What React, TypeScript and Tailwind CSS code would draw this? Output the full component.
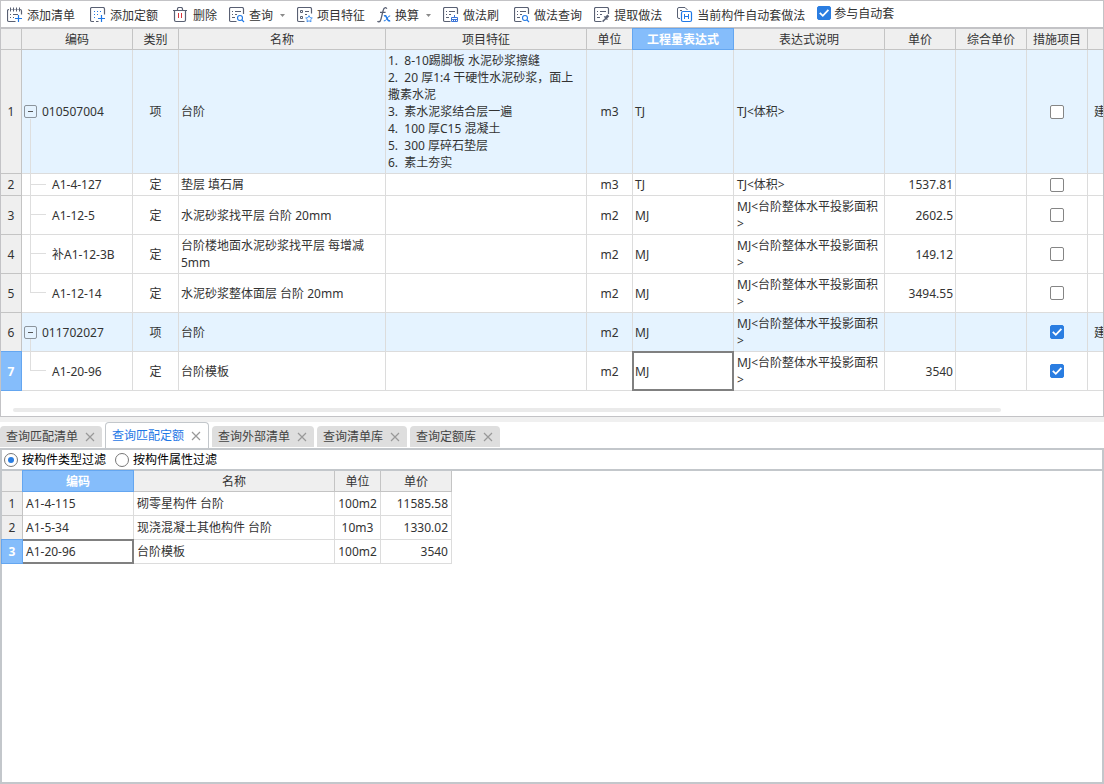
import type { ReactNode } from 'react';

const INK = '#596073';
const BLUE = '#1f78e6';

function Icon({ children }: { children: ReactNode }) {
  return (
    <svg width="16" height="16" viewBox="0 0 16 16" fill="none" stroke={INK} strokeWidth="1" className="shrink-0" aria-hidden="true">
      {children}
    </svg>
  );
}

const AddListIcon = () => (
  <Icon>
    <path strokeWidth="1.2" d="M8.5 14.5H2Q.5 14.5 .5 13V4Q.5 2.5 2 2.5M14.5 7.5V4Q14.5 2.5 13 2.5M4.5 2.5H5.5M7.5 2.5H8.5M10.5 2.5H11.5" />
    <path d="M3.5 .5V4.5M6.5 .5V4.5M9.5 .5V4.5M12.5 .5V4.5" />
    <path d="M3 7.5H4M6 7.5H11M3 10.5H4M6 10.5H7" />
    <path d="M11.5 8V15M8 11.5H15" stroke={BLUE} strokeWidth="1.2" />
  </Icon>
);

const AddQuotaIcon = () => (
  <Icon>
    <path strokeWidth="1.2" d="M8.5 14.5H6M4 14.5H2Q.5 14.5 .5 13V2Q.5 .5 2 .5H13Q14.5 .5 14.5 2V7.5" />
    <path d="M4 4.5H5M7 4.5H8M10 4.5H11M4 7.5H5M7 7.5H8M4 10.5H5" stroke={BLUE} />
    <path d="M11.5 8V15M8 11.5H15" stroke={BLUE} strokeWidth="1.2" />
  </Icon>
);

const TrashIcon = () => (
  <Icon>
    <path strokeWidth="1.2" d="M0 3.5H14M4.5 3.5V2Q4.5 .5 6 .5H8Q9.5 .5 9.5 2V3.5M1.5 3.5V13Q1.5 14.5 3 14.5H11Q12.5 14.5 12.5 13V3.5" />
    <path d="M5.5 6V11M8.5 6V11" stroke="#d8343c" />
  </Icon>
);

function Sheet() {
  return (
    <>
      <path strokeWidth="1.2" d="M7.5 14.5H2Q.5 14.5 .5 13V2Q.5 .5 2 .5H13Q14.5 .5 14.5 2V7" />
      <path d="M3 4.5H4M6 4.5H12M3 7.5H4M6 7.5H8M3 10.5H6" />
    </>
  );
}

const SearchIcon = () => (
  <Icon>
    <Sheet />
    <circle cx="11" cy="11" r="2.5" stroke={BLUE} strokeWidth="1.1" />
    <path d="M12.9 12.9L15 15" stroke={BLUE} strokeWidth="1.2" />
  </Icon>
);

const FeatureIcon = () => (
  <Icon>
    <path strokeWidth="1.2" d="M7.5 14.5H2Q.5 14.5 .5 13V2Q.5 .5 2 .5H13Q14.5 .5 14.5 2V6.5" />
    <path d="M3.5 3.5H5.5V5.5H3.5ZM3.5 9.5H5.5V11.5H3.5ZM8 4.5H12M8 7.5H10" />
    <path d="M12 8.6L13 10.6L15.3 11L13.7 12.6L14 14.8L12 13.8L10 14.8L10.3 12.6L8.7 11L11 10.6Z" stroke="#4a94ee" />
  </Icon>
);

const FormulaIcon = () => (
  <svg width="14" height="16" viewBox="0 0 14 16" fill="none" className="shrink-0" aria-hidden="true">
    <path d="M9.8 1.8Q9.4 .6 8.3 .7Q6.7 .9 6.1 3.6L4 12.2Q3.4 14.8 1.9 14.9Q.9 14.9 .6 14M3 5.3H8.6" stroke={INK} strokeWidth="1.3" />
    <path d="M7 9Q8.6 8.2 9.3 9.8L10.9 13Q11.5 14.4 13.2 13.6" stroke={BLUE} strokeWidth="1.6" />
    <path d="M13.2 8.9Q11.8 8.6 10.4 11L9.6 12.2Q8.2 14.4 6.8 13.8" stroke={BLUE} strokeWidth="1" />
  </svg>
);

const BrushIcon = () => (
  <Icon>
    <Sheet />
    <path d="M11.5 8V10.5M8.5 12.5V10.5H14.5V12.5M8 12.5H15M8.5 12.5V14.5H14.5V12.5M10.5 13V14.5M12.5 13V14.5" stroke="#3b74d8" />
  </Icon>
);

const PickIcon = () => (
  <Icon>
    <Sheet />
    <path d="M8.6 14.6L12 11.2" strokeWidth="1.5" />
    <path d="M10.2 9.4L13.4 12.6" strokeWidth="1.3" />
    <path d="M11.8 11L14.4 8.4" strokeWidth="2.6" />
  </Icon>
);

const AutoIcon = () => (
  <Icon>
    <path d="M3 11.5H2Q.5 11.5 .5 10V2Q.5 .5 2 .5H8L10.5 3M3 3.5H5" />
    <rect x="4.5" y="4.5" width="10" height="10" rx="1.5" stroke={BLUE} strokeWidth="1.2" />
    <path d="M7.5 7V12M11.5 7V12M7.5 9.5H11.5" stroke={BLUE} />
  </Icon>
);

type Tool = { label: string; icon: ReactNode; menu?: boolean; roomy?: boolean };

const tools: Tool[] = [
  { label: '添加清单', icon: <AddListIcon />, roomy: true },
  { label: '添加定额', icon: <AddQuotaIcon />, roomy: true },
  { label: '删除', icon: <TrashIcon /> },
  { label: '查询', icon: <SearchIcon />, menu: true },
  { label: '项目特征', icon: <FeatureIcon /> },
  { label: '换算', icon: <FormulaIcon />, menu: true },
  { label: '做法刷', icon: <BrushIcon />, roomy: true },
  { label: '做法查询', icon: <SearchIcon /> },
  { label: '提取做法', icon: <PickIcon />, roomy: true },
  { label: '当前构件自动套做法', icon: <AutoIcon /> },
];

function CheckBox({ label, checked }: { label: string; checked: boolean }) {
  return (
    <span className="relative block h-3.5 w-3.5 shrink-0">
      <input
        type="checkbox"
        aria-label={label}
        defaultChecked={checked}
        className="peer block h-3.5 w-3.5 appearance-none rounded-xs border border-[#858585] bg-white checked:border-[#2a7de1] checked:bg-[#2a7de1]"
      />
      <svg viewBox="0 0 14 14" className="pointer-events-none absolute inset-0 hidden h-3.5 w-3.5 peer-checked:block" fill="none" stroke="#fff" strokeWidth="1.8" aria-hidden="true">
        <path d="M2.8 6.8L5.8 9.8L11.4 3.8" />
      </svg>
    </span>
  );
}

function Toolbar() {
  return (
    <div className="flex h-7 items-center gap-3 border-b-2 border-[#c3c3c6] pl-1.5">
      <div className="flex items-center gap-3 pt-0.5">
        {tools.map((t) => (
          <button key={t.label} type="button" className={t.roomy ? 'mr-[3px] flex items-center whitespace-nowrap' : 'flex items-center whitespace-nowrap'}>
            {t.icon}
            <span className="ml-1">{t.label}</span>
            {t.menu && (
              <svg width="5" height="3" viewBox="0 0 5 3" className="ml-[7px]" aria-hidden="true">
                <path d="M0 0H5L2.5 3Z" fill="#8a8a8a" />
              </svg>
            )}
          </button>
        ))}
      </div>
      <label className="flex items-center gap-[3px] pb-0.5 whitespace-nowrap">
        <CheckBox label="参与自动套" checked />
        参与自动套
      </label>
    </div>
  );
}

type Row = {
  code: string;
  parent?: boolean;
  last?: boolean;
  kind: string;
  name: string;
  feature?: string;
  unit: string;
  expr: string;
  desc: string;
  price?: string;
  measure: boolean;
  extra?: string;
  height: string;
};

const AREA = 'MJ<台阶整体水平投影面积>';

const rows: Row[] = [
  {
    code: '010507004', parent: true, kind: '项', name: '台阶', unit: 'm3', expr: 'TJ', desc: 'TJ<体积>', measure: false, extra: '建', height: 'h-[124px]',
    feature: '1.  8-10踢脚板 水泥砂浆擦缝\n2.  20 厚1:4 干硬性水泥砂浆，面上撒素水泥\n3.  素水泥浆结合层一遍\n4.  100 厚C15 混凝土\n5.  300 厚碎石垫层\n6.  素土夯实',
  },
  { code: 'A1-4-127', kind: '定', name: '垫层 填石屑', unit: 'm3', expr: 'TJ', desc: 'TJ<体积>', price: '1537.81', measure: false, height: 'h-[22px]' },
  { code: 'A1-12-5', kind: '定', name: '水泥砂浆找平层 台阶 20mm', unit: 'm2', expr: 'MJ', desc: AREA, price: '2602.5', measure: false, height: 'h-[39px]' },
  { code: '补A1-12-3B', kind: '定', name: '台阶楼地面水泥砂浆找平层 每增减 5mm', unit: 'm2', expr: 'MJ', desc: AREA, price: '149.12', measure: false, height: 'h-[39px]' },
  { code: 'A1-12-14', last: true, kind: '定', name: '水泥砂浆整体面层 台阶 20mm', unit: 'm2', expr: 'MJ', desc: AREA, price: '3494.55', measure: false, height: 'h-[39px]' },
  { code: '011702027', parent: true, kind: '项', name: '台阶', unit: 'm2', expr: 'MJ', desc: AREA, measure: true, extra: '建', height: 'h-[39px]' },
  { code: 'A1-20-96', last: true, kind: '定', name: '台阶模板', unit: 'm2', expr: 'MJ', desc: AREA, price: '3540', measure: true, height: 'h-[39px]' },
];

const TH = 'h-[21px] border-r border-b border-[#c4c4c4] bg-[#efefef] p-0 text-center font-normal whitespace-nowrap';
const TH_ON = 'relative h-[21px] border-r border-b border-[#64a6f0] bg-[#85bdfb] p-0 text-center font-bold whitespace-nowrap text-white';
const NUM = 'border-r border-b border-[#c4c4c4] bg-[#efefef] p-0 text-center font-normal';
const NUM_ON = 'relative border-r border-b border-[#64a6f0] bg-[#85bdfb] p-0 text-center font-bold text-white';
const TD = 'border-r border-b border-[#dcdcdc] px-0.5 py-0';
const TD_SMALL = 'border-r border-b border-[#dcdcdc] px-[3px] py-0';

function HeadFrame() {
  return <span className="pointer-events-none absolute -inset-px border border-[#64a6f0]" />;
}

function CodeCell({ row }: { row: Row }) {
  if (row.parent) {
    return (
      <td className={`${TD} relative`}>
        <span className="absolute top-[calc(50%+7px)] bottom-[-1px] left-2 w-px bg-[#dedede]" />
        <span className="flex items-center gap-[5px]">
          <button type="button" aria-label="折叠" className="flex h-[13px] w-[13px] items-center justify-center rounded-xs border border-[#8c949c]">
            <span className="h-px w-[5px] bg-[#555]" />
          </button>
          {row.code}
        </span>
      </td>
    );
  }
  return (
    <td className={`${TD} relative`}>
      <span className={row.last ? 'absolute top-0 bottom-1/2 left-2 w-px bg-[#dedede]' : 'absolute top-0 bottom-[-1px] left-2 w-px bg-[#dedede]'} />
      <span className="absolute bottom-1/2 left-2 h-px w-4 bg-[#dedede]" />
      <span className="pl-7">{row.code}</span>
    </td>
  );
}

function MainTable() {
  return (
    <table className="w-full table-fixed border-separate border-spacing-0">
      <colgroup>
        <col className="w-[21px]" />
        <col className="w-[111px]" />
        <col className="w-[46px]" />
        <col className="w-[207px]" />
        <col className="w-[201px]" />
        <col className="w-[46px]" />
        <col className="w-[101px]" />
        <col className="w-[151px]" />
        <col className="w-[71px]" />
        <col className="w-[71px]" />
        <col className="w-[61px]" />
        <col />
      </colgroup>
      <thead>
        <tr>
          <td className={TH} />
          <th className={TH}>编码</th>
          <th className={TH}>类别</th>
          <th className={TH}>名称</th>
          <th className={TH}>项目特征</th>
          <th className={TH}>单位</th>
          <th className={TH_ON}><HeadFrame />工程量表达式</th>
          <th className={TH}>表达式说明</th>
          <th className={TH}>单价</th>
          <th className={TH}>综合单价</th>
          <th className={TH}>措施项目</th>
          <td className="border-b border-[#c4c4c4] bg-[#efefef]" />
        </tr>
      </thead>
      <tbody>
        {rows.map((r, i) => {
          const active = i === rows.length - 1;
          return (
            <tr key={r.code} className={r.parent ? `${r.height} bg-[#e5f3ff]` : r.height}>
              <th scope="row" className={active ? NUM_ON : NUM}>
                {active && <HeadFrame />}
                {i + 1}
              </th>
              <CodeCell row={r} />
              <td className={`${TD} text-center`}>{r.kind}</td>
              <td className={TD}>{r.name}</td>
              <td className={`${TD} whitespace-pre-wrap`}>{r.feature}</td>
              <td className={`${TD} text-center`}>{r.unit}</td>
              <td className={`${TD} relative`}>
                {active && <span className="pointer-events-none absolute -inset-px border-2 border-[#808080]" />}
                {r.expr}
              </td>
              <td className={TD_SMALL}>{r.desc}</td>
              <td className={`${TD} text-right`}>{r.price}</td>
              <td className={TD} />
              <td className={TD}>
                <span className="flex justify-center">
                  <CheckBox label={`措施项目 ${r.code}`} checked={r.measure} />
                </span>
              </td>
              <td className="border-b border-[#dcdcdc] py-0 pr-0 pl-1.5 whitespace-nowrap">{r.extra}</td>
            </tr>
          );
        })}
      </tbody>
    </table>
  );
}

const tabs = ['查询匹配清单', '查询匹配定额', '查询外部清单', '查询清单库', '查询定额库'];

function Tabs() {
  return (
    <div role="tablist" className="flex h-[26px] items-end gap-[3px]">
      {tabs.map((t, i) => {
        const on = i === 1;
        return (
          <div
            key={t}
            className={
              on
                ? 'flex h-[26px] items-center gap-[7px] rounded-t border border-b-0 border-[#c3c7cb] bg-white pr-[7px] pl-1.5 text-[#1f78e6]'
                : 'mb-px flex h-[21px] items-center gap-[7px] rounded-t bg-[#dedede] pr-[7px] pl-1.5 text-[#444]'
            }
          >
            <button type="button" role="tab" aria-selected={on} className="whitespace-nowrap">{t}</button>
            <button type="button" aria-label={`关闭${t}`}>
              <svg width="10" height="10" viewBox="0 0 10 10" stroke="#999" strokeWidth="1.2" className="block" aria-hidden="true">
                <path d="M1 1L9 9M9 1L1 9" />
              </svg>
            </button>
          </div>
        );
      })}
    </div>
  );
}

function Radio({ label, checked }: { label: string; checked?: boolean }) {
  return (
    <label className="flex items-center gap-1 whitespace-nowrap text-black">
      <span className="relative block h-3.5 w-3.5">
        <input type="radio" name="filter" defaultChecked={checked} className="peer block h-3.5 w-3.5 appearance-none rounded-full border border-[#777] bg-white" />
        <span className="pointer-events-none absolute inset-1 hidden rounded-full bg-[#2a7de1] peer-checked:block" />
      </span>
      {label}
    </label>
  );
}

const results = [
  ['A1-4-115', '砌零星构件 台阶', '100m2', '11585.58'],
  ['A1-5-34', '现浇混凝土其他构件 台阶', '10m3', '1330.02'],
  ['A1-20-96', '台阶模板', '100m2', '3540'],
];

function ResultTable() {
  return (
    <table className="w-[450px] table-fixed border-separate border-spacing-0">
      <colgroup>
        <col className="w-[21px]" />
        <col className="w-[111px]" />
        <col className="w-[201px]" />
        <col className="w-[46px]" />
        <col className="w-[71px]" />
      </colgroup>
      <thead>
        <tr>
          <td className={TH} />
          <th className={TH_ON}><HeadFrame />编码</th>
          <th className={TH}>名称</th>
          <th className={TH}>单位</th>
          <th className={TH}>单价</th>
        </tr>
      </thead>
      <tbody>
        {results.map(([code, name, unit, price], i) => {
          const active = i === results.length - 1;
          return (
            <tr key={code} className="h-6">
              <th scope="row" className={active ? NUM_ON : NUM}>
                {active && <HeadFrame />}
                {i + 1}
              </th>
              <td className={`${TD_SMALL} relative`}>
                {active && <span className="pointer-events-none absolute -inset-y-px -right-px left-0 border-y-2 border-r-2 border-[#808080]" />}
                {code}
              </td>
              <td className={TD_SMALL}>{name}</td>
              <td className="border-r border-b border-[#dcdcdc] p-0 text-center">{unit}</td>
              <td className={`${TD_SMALL} text-right`}>{price}</td>
            </tr>
          );
        })}
      </tbody>
    </table>
  );
}

export default function App() {
  return (
    <div className="flex min-h-screen flex-col bg-white font-['Noto_Sans','Noto_Sans_CJK_SC',sans-serif] text-[12px] leading-[17px] text-[#333]">
      <section className="overflow-hidden border border-[#c3c3c6]">
        <Toolbar />
        <MainTable />
        <div className="pt-[17px] pr-[102px] pb-1 pl-3">
          <div className="h-1 rounded-full bg-[#eaeaea]" />
        </div>
      </section>
      <div className="h-[5px] bg-[#f0f0f0]" />
      <Tabs />
      <section className="flex-1 border-2 border-[#c3c7cb]">
        <div className="flex h-[21px] items-center gap-[9px] border-b-2 border-[#c3c7cb] pl-0.5">
          <Radio label="按构件类型过滤" checked />
          <Radio label="按构件属性过滤" />
        </div>
        <ResultTable />
      </section>
    </div>
  );
}
